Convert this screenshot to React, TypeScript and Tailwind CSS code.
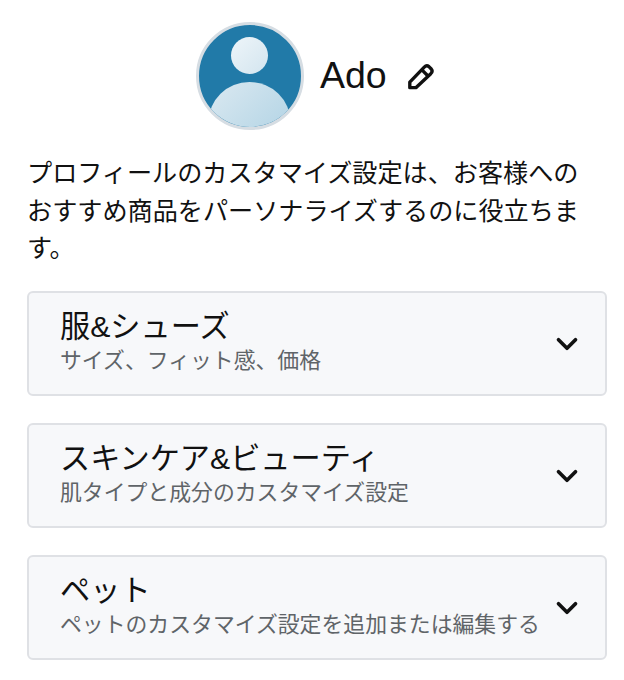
import { ChevronDown } from "lucide-react";

type CardProps = {
  title: string;
  sub: string;
};

function Avatar() {
  return (
    <svg width="108" height="108" viewBox="0 0 108 108" className="shrink-0">
      <defs>
        <linearGradient id="head" x1="0" y1="0" x2="1" y2="1">
          <stop offset="0" stopColor="#eef5f9" />
          <stop offset="1" stopColor="#d3e5ef" />
        </linearGradient>
        <linearGradient id="body" x1="0" y1="0" x2="1" y2="1">
          <stop offset="0" stopColor="#dbe9f1" />
          <stop offset="1" stopColor="#a9cfe2" />
        </linearGradient>
        <clipPath id="disc">
          <circle cx="54" cy="54" r="51" />
        </clipPath>
      </defs>
      <circle cx="54" cy="54" r="52.5" fill="#217aa8" stroke="#d6dde3" strokeWidth="3" />
      <g clipPath="url(#disc)">
        <circle cx="53.5" cy="33.5" r="18.5" fill="url(#head)" />
        <ellipse cx="53.5" cy="100" rx="41" ry="40" fill="url(#body)" />
      </g>
    </svg>
  );
}

function PencilIcon() {
  return (
    <svg width="28" height="28" viewBox="0 0 30 30" fill="none" stroke="#111" strokeWidth="3.6" strokeLinejoin="round">
      <path d="M3 21.5 L18.5 5.5 Q21 3 23.5 5 L26 7.5 Q28 10 25.5 12.5 L9.5 27.5 L3 27.5 Z" />
      <path d="M16 8.5 L22.5 15" />
    </svg>
  );
}

function Card({ title, sub }: CardProps) {
  return (
    <div className="flex h-[105px] items-center justify-between rounded-md border-2 border-[#dfe1e5] bg-[#f7f8fa] pr-[21px] pl-[31px]">
      <div className="flex flex-col">
        <p className="text-[30.2px] leading-[36px] text-[#111]">{title}</p>
        <p className="text-[21.85px] leading-[32px] text-[#5f6468]">{sub}</p>
      </div>
      <ChevronDown size={34} strokeWidth={2.6} color="#111" className="mt-px" />
    </div>
  );
}

export default function App() {
  return (
    <div
      className="flex h-[680px] w-[624px] flex-col overflow-hidden bg-white pt-[22px] pr-[17px] pl-[27px] text-[#111]"
      style={{ fontFamily: '"Liberation Sans", "Noto Sans CJK JP", sans-serif' }}
    >
      <div className="ml-[169px] flex items-center">
        <Avatar />
        <span className="ml-[16px] text-[37.5px] leading-none">Ado</span>
        <span className="ml-[20px] flex">
          <PencilIcon />
        </span>
      </div>

      <p className="mt-[25px] mr-[10px] text-[25.13px] leading-[37.5px]">
        プロフィールのカスタマイズ設定は、お客様へのおすすめ商品をパーソナライズするのに役立ちます。
      </p>

      <div className="mt-[23px] flex flex-col gap-[27px]">
        <Card title="服&シューズ" sub="サイズ、フィット感、価格" />
        <Card title="スキンケア&ビューティ" sub="肌タイプと成分のカスタマイズ設定" />
        <Card title="ペット" sub="ペットのカスタマイズ設定を追加または編集する" />
      </div>
    </div>
  );
}
